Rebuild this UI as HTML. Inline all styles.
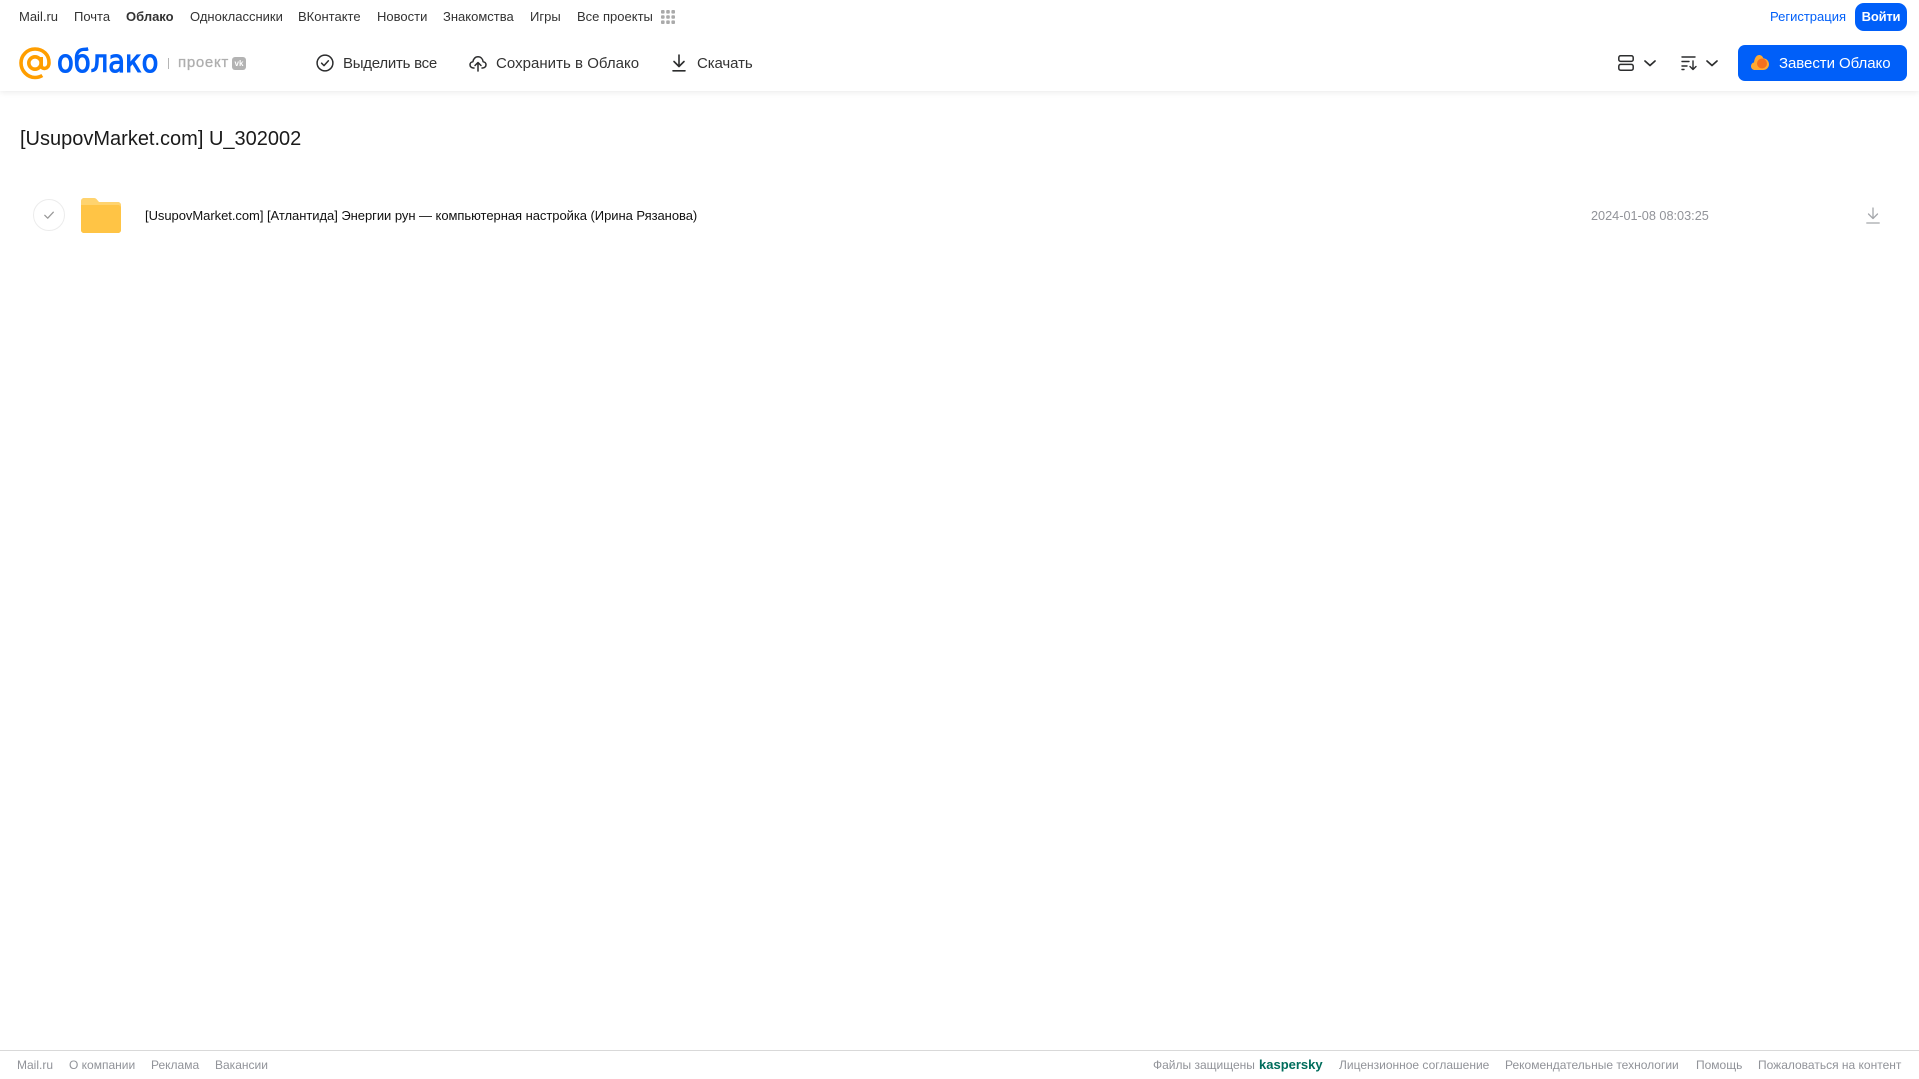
<!DOCTYPE html>
<html lang="ru"><head><meta charset="utf-8"><title>Облако</title>
<style>
html,body{margin:0;padding:0;background:#fff}
body{width:1919px;height:1079px;position:relative;overflow:hidden;font-family:"Liberation Sans",Arial,sans-serif}
.t{position:absolute;white-space:nowrap;line-height:18px}
.n{top:8px;font-size:13px;color:#333}
.a{top:55px;font-size:15px;color:#333;line-height:18px}
.f{top:1056px;font-size:12px;color:#919399}
svg{position:absolute;overflow:visible}
</style></head><body>
<div style="position:absolute;left:0;top:0;width:1919px;height:91px;background:#fff;box-shadow:0 1px 6px rgba(0,0,0,.09)"></div>

<span class="t n" style="left:19px">Mail.ru</span>
<span class="t n" style="left:74px">Почта</span>
<span class="t n" style="left:126px;font-weight:bold">Облако</span>
<span class="t n" style="left:190px">Одноклассники</span>
<span class="t n" style="left:298px">ВКонтакте</span>
<span class="t n" style="left:377px">Новости</span>
<span class="t n" style="left:443px">Знакомства</span>
<span class="t n" style="left:530px">Игры</span>
<span class="t n" style="left:577px">Все проекты</span>
<svg style="left:661px;top:10px" width="14" height="14" fill="#aaa"><rect x="0" y="0" width="3.6" height="3.6" rx="1"/><rect x="5.2" y="0" width="3.6" height="3.6" rx="1"/><rect x="10.4" y="0" width="3.6" height="3.6" rx="1"/><rect x="0" y="5.2" width="3.6" height="3.6" rx="1"/><rect x="5.2" y="5.2" width="3.6" height="3.6" rx="1"/><rect x="10.4" y="5.2" width="3.6" height="3.6" rx="1"/><rect x="0" y="10.4" width="3.6" height="3.6" rx="1"/><rect x="5.2" y="10.4" width="3.6" height="3.6" rx="1"/><rect x="10.4" y="10.4" width="3.6" height="3.6" rx="1"/></svg>

<span class="t" style="left:1770px;top:8px;font-size:13px;color:#005ff9">Регистрация</span>
<div style="position:absolute;left:1855px;top:3px;width:52px;height:28px;border-radius:9px;background:#005ff9;color:#fff;font-size:13px;font-weight:bold;letter-spacing:-.2px;line-height:27px;text-align:center">Войти</div>

<!-- logo -->
<svg style="left:19px;top:47px" width="32" height="33" viewBox="0 0 32 33" fill="none" stroke="#ff9e00" stroke-width="3.6"><circle cx="16" cy="16" r="6.2"/><path d="M22.2 10v8.2c0 4.6 7.6 4.6 7.8-2.2C30.300 7.500 23.800 2 16 2 8.300 2 2 8.300 2 16s6.300 14.500 14 14.500c3 0 5.300-.8 7.300-2"/></svg>
<span class="t" style="left:57px;top:44px;font-size:31px;line-height:36px;color:#005ff9;-webkit-text-stroke:1.1px #005ff9;font-family:'DejaVu Sans',sans-serif;transform-origin:0 50%;transform:scaleX(.885)">облако</span>
<div style="position:absolute;left:168px;top:58px;width:1px;height:11px;background:#b5b5b5"></div>
<span class="t" style="left:178px;top:54px;font-size:15px;color:#aeaeae;-webkit-text-stroke:.3px #aeaeae;letter-spacing:.7px">проект</span>
<div style="position:absolute;left:232px;top:57px;width:14px;height:13px;border-radius:3px;background:#b3b3b3;color:#fff;font-size:8px;font-weight:bold;line-height:13px;text-align:center">vk</div>

<!-- actions -->
<svg style="left:316px;top:54px" width="18" height="18" viewBox="0 0 18 18" fill="none" stroke="#2c2d2e" stroke-width="1.5"><circle cx="9" cy="9" r="7.9"/><path d="M5.600 9.200l2.400 2.400 4.400-4.800" stroke-linecap="round" stroke-linejoin="round"/></svg>
<span class="t a" style="left:343px;letter-spacing:-.25px">Выделить все</span>
<svg style="left:469px;top:54px" width="18" height="18" viewBox="0 0 18 18" fill="none" stroke="#2c2d2e" stroke-width="1.500" stroke-linecap="round" stroke-linejoin="round"><path d="M5 14H4.300C2.300 14 1 12.500 1 10.800c0-1.700 1.300-3 2.900-3.100C4.300 4.900 6.300 2.800 9 2.800c2.700 0 4.700 2 5.100 4.900 1.600.1 2.900 1.400 2.900 3.100 0 1.700-1.300 3.200-3.300 3.200H13"/><path d="M9 17V8.800M6 11.500l3-3 3 3"/></svg>
<span class="t a" style="left:496px;letter-spacing:.03px">Сохранить в Облако</span>
<svg style="left:671px;top:54px" width="16" height="18" viewBox="0 0 16 18" fill="none" stroke="#2c2d2e" stroke-width="1.600" stroke-linecap="round" stroke-linejoin="round"><path d="M8 1v11M3 7.500L8 12.500l5-5M2 16.800h12"/></svg>
<span class="t a" style="left:697px;letter-spacing:-.1px">Скачать</span>

<!-- right icons -->
<svg style="left:1618px;top:55px" width="16" height="16" viewBox="0 0 16 16" fill="none" stroke="#2c2d2e" stroke-width="1.500"><rect x=".8" y=".8" width="14.400" height="5.600" rx="1.800"/><rect x=".8" y="9.400" width="14.400" height="5.800" rx="1.800"/></svg>
<svg style="left:1644px;top:60px" width="12" height="7" fill="none" stroke="#2c2d2e" stroke-width="1.700" stroke-linecap="round" stroke-linejoin="round"><path d="M1 1l5 4.500L11 1"/></svg>
<svg style="left:1681px;top:55px" width="17" height="16" viewBox="0 0 17 16" fill="none" stroke="#2c2d2e" stroke-width="1.400" stroke-linecap="round" stroke-linejoin="round"><path d="M1 2h13M1 6.500h7M1 11h5M1 14.500h2M12 6v8.500M9 11.500l3 3 3-3"/></svg>
<svg style="left:1706px;top:60px" width="12" height="7" fill="none" stroke="#2c2d2e" stroke-width="1.700" stroke-linecap="round" stroke-linejoin="round"><path d="M1 1l5 4.500L11 1"/></svg>

<div style="position:absolute;left:1738px;top:45px;width:169px;height:36px;border-radius:7px;background:#005ff9"></div>
<svg style="left:1751px;top:54px" width="18" height="17" viewBox="0 0 18 17"><path d="M4 16C1.700 16 0 14.300 0 12.200 0 10.300 1.300 8.800 3 8.400 3.300 5.500 4.800 1 8 1c2.200 0 3.600 1.300 4.300 3.200C15.500 4.500 18 7 18 10.200c0 3.300-2.600 5.800-6 5.800z" fill="#ffa930"/><circle cx="11" cy="9.500" r="5" fill="#f4701f"/></svg>
<span class="t" style="left:1779px;top:55px;font-size:15px;color:#fff;letter-spacing:-.05px">Завести Облако</span>

<!-- title -->
<span class="t" style="left:20px;top:126px;font-size:20px;line-height:26px;color:#1a1a1a">[UsupovMarket.com] U_302002</span>

<!-- row -->
<svg style="left:33px;top:199px" width="32" height="32" fill="none"><circle cx="16" cy="16" r="15.500" stroke="#ececec"/><path d="M11.800 16.300l2.900 2.900 5.600-6" stroke="#999" stroke-width="1.300" stroke-linecap="round" stroke-linejoin="round"/></svg>
<svg style="left:81px;top:198px" width="40" height="35" viewBox="0 0 40 35"><path d="M0 3C0 1.300 1.300 0 3 0h10c1.500 0 2.300.6 3.300 2L18 4h19c1.700 0 3 1.300 3 3v25c0 1.700-1.300 3-3 3H3c-1.700 0-3-1.300-3-3z" fill="#ffd36e"/><path d="M0 7h37c1.700 0 3 1.300 3 3v22c0 1.700-1.300 3-3 3H3c-1.700 0-3-1.300-3-3z" fill="#ffc445"/></svg>
<span class="t" style="left:145px;top:207px;font-size:13px;letter-spacing:-.045px;color:#111">[UsupovMarket.com] [Атлантида] Энергии рун — компьютерная настройка (Ирина Рязанова)</span>
<span class="t" style="left:1591px;top:207px;font-size:12.700px;color:#919399">2024-01-08 08:03:25</span>
<svg style="left:1866px;top:207px" width="14" height="17" viewBox="0 0 14 17" fill="none" stroke="#a5a7ab" stroke-width="1.300" stroke-linecap="round" stroke-linejoin="round"><path d="M7 1v10.500M2.500 7L7 11.500 11.500 7M.8 16h12.400"/></svg>

<!-- footer -->
<div style="position:absolute;left:0;top:1050px;width:1919px;height:1px;background:#d9d9d9"></div>
<span class="t f" style="left:17px">Mail.ru</span>
<span class="t f" style="left:69px">О компании</span>
<span class="t f" style="left:151px">Реклама</span>
<span class="t f" style="left:215px">Вакансии</span>
<span class="t f" style="left:1153px">Файлы защищены</span>
<span class="t f" style="left:1259px;color:#006d5c;font-weight:bold;font-size:13px">kaspersky</span>
<span class="t f" style="left:1339px">Лицензионное соглашение</span>
<span class="t f" style="left:1505px">Рекомендательные технологии</span>
<span class="t f" style="left:1696px">Помощь</span>
<span class="t f" style="left:1758px">Пожаловаться на контент</span>
</body></html>
